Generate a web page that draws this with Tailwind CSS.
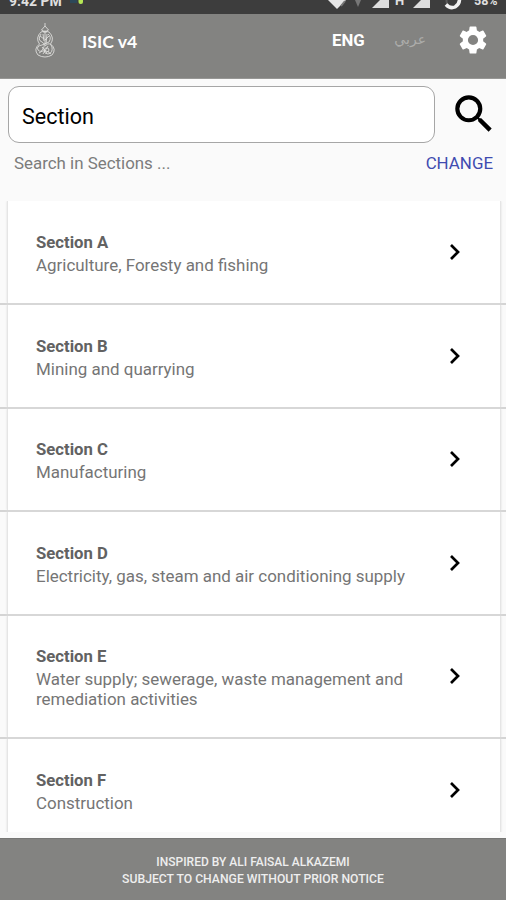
<!DOCTYPE html>
<html lang="en">
<head>
<meta charset="utf-8">
<title>ISIC v4</title>
<script src="https://cdn.jsdelivr.net/npm/@tailwindcss/browser@4"></script>
</head>
<body class="bg-[#fafafa] font-['Roboto',sans-serif]">
<div class="flex h-[900px] w-[506px] flex-col overflow-hidden">
  <div class="relative h-[14px] shrink-0 overflow-hidden bg-[#3d3d3d] text-[14px] leading-[16px] font-bold text-[#e0e0e0]">
    <span class="absolute -top-[7px] left-[9px] whitespace-nowrap">9:42 PM</span>
    <span class="absolute -top-[7px] left-[395px] text-[13px]">H</span>
    <span class="absolute -top-[7px] left-[474px] text-[12.500px]">58%</span>
    <svg class="absolute top-0 left-0" width="506" height="14" viewBox="0 0 506 14">
      <path d="M70 0h7v3h-7z" fill="#2d4858"/><rect x="78.500" y="-4" width="4.500" height="8" rx="2" fill="#b5e655"/>
      <path d="M328 0h18l-9 9z" fill="#e6e6e6"/><path d="M341 6l4-5" stroke="#777" stroke-width="2"/>
      <path d="M355 0h6l-3 7z" fill="#777"/>
      <path d="M372 8L389-9V8zM413 8L430-9V8z" fill="#dedede"/>
      <circle cx="453" cy="1" r="6.500" fill="none" stroke="#5a5a5a" stroke-width="2"/>
      <path d="M446 4.500Q450 9 455 7Q460 4 459.500-2" fill="none" stroke="#f2f2f2" stroke-width="3.500"/>
    </svg>
  </div>
  <header class="flex h-[65px] shrink-0 items-start border-b border-[#979795] bg-[#838381] text-white">
    <svg class="mt-[8px] ml-[34px]" width="22" height="36" viewBox="0 0 22 36" fill="none" stroke="#e2e2df" stroke-opacity="0.850" stroke-width="1">
      <path d="M11 1v3M11 4L7.500 8L11 10L14.500 8zM9 10h4M7 10Q1 16 5.500 22Q-1 27 4 33Q11 37 18 33Q23 27 16.500 22Q21 16 15 10Q11 8 7 10z"/>
      <path d="M7 12Q3 18 8 20Q12 22 9 27Q7 31 4 28Q2 24 8 23L15 20Q18 15 14 12M9 12l1 7M13 12l-1 10M11 10v13M6 14l4 3M15 14l-4 4M11 24q5-5 7 1q1 6-4 7q-4 0-4-4q1-3 4-2q2 2 0 4M5 31q6-5 12 1M8 25l5 6M14 24l-5 8"/>
    </svg>
    <h1 class="mt-[15.500px] ml-[26px] w-[60px] font-['Lato',sans-serif] text-[17.700px] leading-[24px] font-bold whitespace-nowrap">ISIC v4</h1>
    <span class="mt-[13.500px] ml-[190px] w-[36px] text-[16.800px] leading-[24px] font-bold">ENG</span>
    <span class="mt-[13px] ml-[24px] w-[34px] font-['DejaVu_Sans',sans-serif] text-[14px] leading-[24px] text-[#adadab]" lang="ar" dir="rtl">عربي</span>
    <svg class="mt-[9px] ml-[30px]" width="34" height="34" viewBox="0 0 24 24" fill="white"><path d="M19.140 12.940c.04-.3.060-.61.060-.94s-.02-.64-.07-.94l2.030-1.580a.49.49 0 0 0 .12-.61l-1.920-3.320a.488.488 0 0 0-.59-.22l-2.390.96c-.5-.38-1.030-.7-1.620-.94l-.36-2.540a.484.484 0 0 0-.48-.41h-3.840c-.24 0-.43.17-.47.41l-.36 2.540c-.59.24-1.130.57-1.620.94l-2.390-.96c-.22-.08-.47 0-.59.22L2.740 8.870c-.12.210-.08.470.12.610l2.030 1.580c-.05.3-.09.630-.09.940s.02.640.07.940l-2.030 1.580a.49.49 0 0 0-.12.610l1.920 3.320c.12.220.37.290.59.220l2.390-.96c.5.380 1.030.7 1.620.94l.36 2.540c.05.240.24.410.48.410h3.840c.24 0 .44-.17.47-.41l.36-2.540c.59-.24 1.130-.56 1.620-.94l2.390.96c.22.080.47 0 .59-.22l1.920-3.320c.12-.22.070-.47-.12-.61zM12 15.600A3.600 3.600 0 1 1 12 8.400a3.600 3.600 0 0 1 0 7.200z"/></svg>
  </header>

  <main class="flex h-[759px] shrink-0 flex-col">
    <div class="flex pt-[7px] pl-[8px]">
      <div class="flex h-[57px] w-[427px] items-center rounded-[11px] border border-[#a6a6a6] bg-white pt-[5px] pl-[13px] text-[21.500px] text-black">Section</div>
      <svg class="mt-[3px] ml-[14px]" width="50" height="50" viewBox="0 0 24 24"><path d="M15.500 14h-.79l-.28-.27A6.470 6.470 0 0 0 16 9.500 6.500 6.500 0 1 0 9.500 16c1.610 0 3.090-.59 4.230-1.570l.27.28v.79l5 4.990L20.490 19zm-6 0a4.500 4.500 0 1 1 0-9 4.500 4.500 0 0 1 0 9z"/></svg>
    </div>
    <div class="flex h-[58px] justify-between pt-[9px] pr-[13px] pl-[14px] text-[16.900px] leading-[22px]">
      <span class="text-[#7c7c7c]">Search in Sections ...</span>
      <span class="text-[#3f4bb0]">CHANGE</span>
    </div>
    <div class="h-[631px] overflow-hidden">
      <section class="flex h-[104px] border-b-2 border-[#d4d4d4] pr-[5px] pl-[7px]">
        <div class="flex w-full justify-between border-x border-[#e5e5e5] bg-white pr-[32px] pl-[28px] shadow-[0_0_2px_#ddd]">
          <div class="pt-[32px] leading-[20px] text-[#757575]"><h2 class="mb-[2px] text-[16.700px] font-bold text-[#626262]">Section A</h2><p class="w-[385px] text-[16.950px]">Agriculture, Foresty and fishing</p></div>
          <svg class="my-auto" width="24" height="24" viewBox="0 0 24 24"><path d="M7 5l7 7-7 7" fill="none" stroke="black" stroke-width="2.700"/></svg>
        </div>
      </section>
      <section class="flex h-[103.500px] border-b-2 border-[#d4d4d4] pr-[5px] pl-[7px]">
        <div class="flex w-full justify-between border-x border-[#e5e5e5] bg-white pr-[32px] pl-[28px] shadow-[0_0_2px_#ddd]">
          <div class="pt-[32px] leading-[20px] text-[#757575]"><h2 class="mb-[2px] text-[16.700px] font-bold text-[#626262]">Section B</h2><p class="w-[385px] text-[16.950px]">Mining and quarrying</p></div>
          <svg class="my-auto" width="24" height="24" viewBox="0 0 24 24"><path d="M7 5l7 7-7 7" fill="none" stroke="black" stroke-width="2.700"/></svg>
        </div>
      </section>
      <section class="flex h-[103.500px] border-b-2 border-[#d4d4d4] pr-[5px] pl-[7px]">
        <div class="flex w-full justify-between border-x border-[#e5e5e5] bg-white pr-[32px] pl-[28px] shadow-[0_0_2px_#ddd]">
          <div class="pt-[31.500px] leading-[20px] text-[#757575]"><h2 class="mb-[2px] text-[16.700px] font-bold text-[#626262]">Section C</h2><p class="w-[385px] text-[16.950px]">Manufacturing</p></div>
          <svg class="my-auto" width="24" height="24" viewBox="0 0 24 24"><path d="M7 5l7 7-7 7" fill="none" stroke="black" stroke-width="2.700"/></svg>
        </div>
      </section>
      <section class="flex h-[103.500px] border-b-2 border-[#d4d4d4] pr-[5px] pl-[7px]">
        <div class="flex w-full justify-between border-x border-[#e5e5e5] bg-white pr-[32px] pl-[28px] shadow-[0_0_2px_#ddd]">
          <div class="pt-[32px] leading-[20px] text-[#757575]"><h2 class="mb-[2px] text-[16.700px] font-bold text-[#626262]">Section D</h2><p class="w-[385px] text-[16.950px]">Electricity, gas, steam and air conditioning supply</p></div>
          <svg class="my-auto" width="24" height="24" viewBox="0 0 24 24"><path d="M7 5l7 7-7 7" fill="none" stroke="black" stroke-width="2.700"/></svg>
        </div>
      </section>
      <section class="flex h-[123.500px] border-b-2 border-[#d4d4d4] pr-[5px] pl-[7px]">
        <div class="flex w-full justify-between border-x border-[#e5e5e5] bg-white pr-[32px] pl-[28px] shadow-[0_0_2px_#ddd]">
          <div class="pt-[31.500px] leading-[20px] text-[#757575]"><h2 class="mb-[2px] text-[16.700px] font-bold text-[#626262]">Section E</h2><p class="w-[385px] text-[16.950px]">Water supply; sewerage, waste management and remediation activities</p></div>
          <svg class="my-auto" width="24" height="24" viewBox="0 0 24 24"><path d="M7 5l7 7-7 7" fill="none" stroke="black" stroke-width="2.700"/></svg>
        </div>
      </section>
      <section class="flex h-[103.500px] border-b-2 border-[#d4d4d4] pr-[5px] pl-[7px]">
        <div class="flex w-full justify-between border-x border-[#e5e5e5] bg-white pr-[32px] pl-[28px] shadow-[0_0_2px_#ddd]">
          <div class="pt-[32px] leading-[20px] text-[#757575]"><h2 class="mb-[2px] text-[16.700px] font-bold text-[#626262]">Section F</h2><p class="w-[385px] text-[16.950px]">Construction</p></div>
          <svg class="my-auto" width="24" height="24" viewBox="0 0 24 24"><path d="M7 5l7 7-7 7" fill="none" stroke="black" stroke-width="2.700"/></svg>
        </div>
      </section>
    </div>
  </main>
  <footer class="h-[62px] shrink-0 border-t border-[#777775] bg-[#838381] pt-[15px] text-center text-[12.200px] leading-[17px] font-medium text-[#eeeeee]">
    <p class="text-[12px]">INSPIRED BY ALI FAISAL ALKAZEMI</p>
    <p>SUBJECT TO CHANGE WITHOUT PRIOR NOTICE</p>
  </footer>
</div>
</body>
</html>
